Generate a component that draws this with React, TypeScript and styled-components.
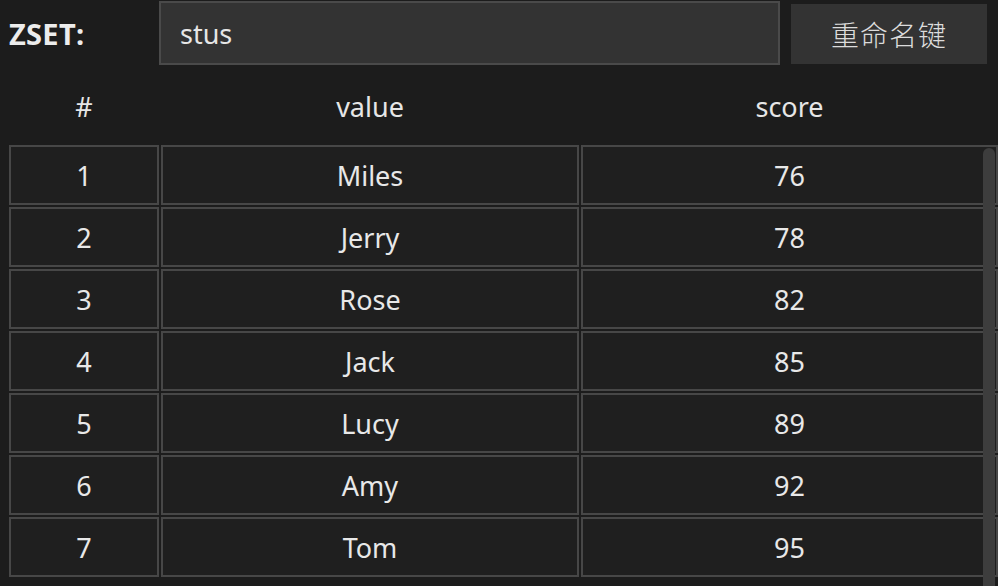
import React from 'react';
import styled, { createGlobalStyle } from 'styled-components';

type Member = { value: string; score: number };

const members: Member[] = [
  { value: 'Miles', score: 76 },
  { value: 'Jerry', score: 78 },
  { value: 'Rose', score: 82 },
  { value: 'Jack', score: 85 },
  { value: 'Lucy', score: 89 },
  { value: 'Amy', score: 92 },
  { value: 'Tom', score: 95 },
];

const App: React.FC = () => {
  return (
    <>
      <GlobalStyle />
      <Page>
        <TopBar>
          <KeyLabel>ZSET:</KeyLabel>
          <KeyInput defaultValue="stus" />
          <RenameButton type="button">重命名键</RenameButton>
        </TopBar>
        <HeadRow>
          <HeadCell>#</HeadCell>
          <HeadCell>value</HeadCell>
          <HeadCell>score</HeadCell>
        </HeadRow>
        <Body>
          <Rows>
            {members.map((m, i) => (
              <React.Fragment key={m.value}>
                <Cell>{i + 1}</Cell>
                <Cell>{m.value}</Cell>
                <Cell>{m.score}</Cell>
              </React.Fragment>
            ))}
          </Rows>
          <ScrollThumb />
        </Body>
      </Page>
    </>
  );
};

export default App;

const GlobalStyle = createGlobalStyle`
  html, body {
    margin: 0;
    padding: 0;
    background: #1c1c1c;
  }

  body {
    font-family: "Noto Sans", "Noto Sans CJK SC", sans-serif;
    color: #e6e6e6;
  }

  * {
    box-sizing: border-box;
  }
`;

const Page = styled.div`
  width: 998px;
  height: 586px;
  overflow: hidden;
  background: #1c1c1c;
`;

const TopBar = styled.div`
  display: flex;
  align-items: center;
  height: 65px;
  padding: 1px 11px 0 9px;
`;

const KeyLabel = styled.label`
  width: 150px;
  font-size: 29px;
  font-weight: 700;
  letter-spacing: 0.3px;
  color: #ececec;
`;

const KeyInput = styled.input`
  flex: 1;
  height: 64px;
  margin: 0 11px 0 0;
  padding: 0 19px;
  align-self: flex-start;
  background: #333333;
  border: 2px solid #4a4a4a;
  color: #e6e6e6;
  font-family: "Noto Sans", "Noto Sans CJK SC", sans-serif;
  font-size: 27px;
  outline: none;
`;

const RenameButton = styled.button`
  width: 196px;
  height: 60px;
  margin-top: 2px;
  background: #333333;
  border: none;
  color: #dcdcdc;
  font-family: "Noto Sans CJK SC", sans-serif;
  font-size: 28px;
  font-weight: 300;
  letter-spacing: 1px;
`;

const HeadRow = styled.div`
  display: grid;
  grid-template-columns: 150px 418px 1fr;
  column-gap: 2px;
  height: 80px;
  padding: 3px 0 0 9px;
`;

const HeadCell = styled.div`
  display: flex;
  align-items: center;
  justify-content: center;
  font-size: 27px;
  color: #e6e6e6;
`;

const Body = styled.div`
  position: relative;
  height: 441px;
  padding-left: 9px;
  overflow: hidden;
`;

const Rows = styled.div`
  display: grid;
  grid-template-columns: 150px 418px 1fr;
  grid-auto-rows: 60px;
  gap: 2px;
`;

const Cell = styled.div`
  display: flex;
  align-items: center;
  justify-content: center;
  background: #1f1f1f;
  border: 2px solid #474747;
  font-size: 27px;
  color: #e8e8e8;
`;

const ScrollThumb = styled.div`
  position: absolute;
  top: 3px;
  right: 3px;
  bottom: 0;
  width: 12px;
  border-radius: 6px 6px 0 0;
  background: #3d3d3d;
`;
